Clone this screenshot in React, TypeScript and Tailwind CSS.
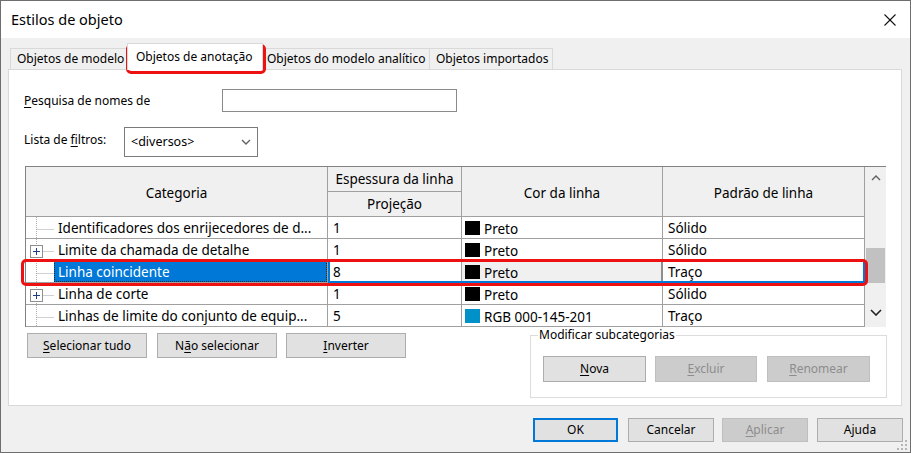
import React from 'react'

type Row = {
    name: string
    plus?: boolean
    selected?: boolean
    thick: string
    swatch: string
    color: string
    pattern: string
}

const rows: Row[] = [
    { name: 'Identificadores dos enrijecedores de d...', thick: '1', swatch: '#000000', color: 'Preto', pattern: 'Sólido' },
    { name: 'Limite da chamada de detalhe', plus: true, thick: '1', swatch: '#000000', color: 'Preto', pattern: 'Sólido' },
    { name: 'Linha coincidente', selected: true, thick: '8', swatch: '#000000', color: 'Preto', pattern: 'Traço' },
    { name: 'Linha de corte', plus: true, thick: '1', swatch: '#000000', color: 'Preto', pattern: 'Sólido' },
    { name: 'Linhas de limite do conjunto de equip...', thick: '5', swatch: '#0091c9', color: 'RGB 000-145-201', pattern: 'Traço' },
]

function TreeLines({ plus }: { plus?: boolean }) {
    return (
        <svg width="28" height="21" viewBox="0 0 28 21" className="shrink-0">
            <line x1="10.5" y1="0" x2="10.5" y2="21" stroke="#b0b0b0" strokeDasharray="1 1" />
            <line x1={plus ? 16.5 : 10.5} y1="12.5" x2="28" y2="12.5" stroke="#a0a0a0" strokeDasharray="1 1" />
            {plus && (
                <g>
                    <rect x="4.5" y="6.5" width="12" height="12" fill="#ffffff" stroke="#8e8e8e" />
                    <line x1="7" y1="12.5" x2="14" y2="12.5" stroke="#1e3f8a" />
                    <line x1="10.5" y1="9" x2="10.5" y2="16" stroke="#1e3f8a" />
                </g>
            )}
        </svg>
    )
}

function Btn({ children, w, disabled, primary }: { children: React.ReactNode; w: string; disabled?: boolean; primary?: boolean }) {
    const base = 'flex items-center justify-center text-[12px] shrink-0'
    const look = disabled
        ? 'bg-[#cccccc] border border-[#bfbfbf] text-[#8d8d8d]'
        : primary
          ? 'bg-[#e1e1e1] border-2 border-[#0078d7] text-black'
          : 'bg-[#e1e1e1] border border-[#adadad] text-black'
    return <div className={`${base} ${look} ${w}`}>{children}</div>
}

function Chevron({ up }: { up?: boolean }) {
    return (
        <svg width="10" height="6" viewBox="0 0 10 6">
            <polyline
                points={up ? '1,5 5,1 9,5' : '1,1 5,5 9,1'}
                fill="none"
                stroke="#606060"
                strokeWidth="1.4"
            />
        </svg>
    )
}

export default function App() {
    return (
        <div className="relative w-[911px] h-[453px] overflow-hidden border border-[#6e6e6e] bg-[#f0f0f0] text-black font-['Segoe_UI','Noto_Sans',sans-serif] flex flex-col">
            {/* title bar */}
            <div className="h-[37px] bg-white flex items-center justify-between pl-[10px] pr-[14px] shrink-0">
                <span className="text-[14.5px]">Estilos de objeto</span>
                <svg width="12" height="12" viewBox="0 0 12 12">
                    <line x1="0.5" y1="0.5" x2="11.5" y2="11.5" stroke="#111" strokeWidth="1.1" />
                    <line x1="11.5" y1="0.5" x2="0.5" y2="11.5" stroke="#111" strokeWidth="1.1" />
                </svg>
            </div>

            <div className="flex flex-col px-[7px]">
                {/* tabs */}
                <div className="h-[31px] flex items-end text-[12px]">
                    <div className="ml-[2px] w-[117px] h-[21px] border border-b-0 border-[#d9d9d9] bg-[#f0f0f0] flex items-center pl-[6px]">
                        Objetos de modelo
                    </div>
                    <div className="relative z-10 -mb-px w-[136px] h-[27px] bg-white border border-b-0 border-[#d9d9d9] flex items-center pl-[8px]">
                        Objetos de anotação
                    </div>
                    <div className="w-[167px] h-[21px] border border-b-0 border-l-0 border-[#d9d9d9] bg-[#f0f0f0] flex items-center pl-[4px]">
                        Objetos do modelo analítico
                    </div>
                    <div className="w-[123px] h-[21px] border border-b-0 border-l-0 border-[#d9d9d9] bg-[#f0f0f0] flex items-center pl-[6px]">
                        Objetos importados
                    </div>
                </div>

                {/* panel */}
                <div className="w-[894px] h-[337px] bg-white border border-[#d9d9d9] flex flex-col pl-[15px] pt-[19px] text-[12px]">
                    <div className="h-[23px] flex items-center">
                        <span className="w-[198px]">
                            <u className="underline-offset-2">P</u>esquisa de nomes de
                        </span>
                        <div className="w-[235px] h-[23px] border border-[#8a8a8a]" />
                    </div>

                    <div className="mt-[15px] h-[30px] flex items-center">
                        <span className="w-[100px] -mt-[4px]">
                            Lista de <u className="underline-offset-2">f</u>iltros:
                        </span>
                        <div className="w-[134px] h-[30px] border border-[#7a7a7a] flex items-center justify-between pl-[6px] pr-[6px] text-[12.5px]">
                            <span>&lt;diversos&gt;</span>
                            <Chevron />
                        </div>
                    </div>

                    {/* grid */}
                    <div className="mt-[9px] ml-[1px] w-[861px] h-[161px] border-t border-l border-[#828282] flex text-[13.5px]">
                        <div className="w-[839px] flex flex-col">
                            <div className="h-[50px] shrink-0 bg-[#f0f0f0] border-b border-[#a0a0a0] flex">
                                <div className="w-[302px] border-r border-[#a0a0a0] flex items-center justify-center pt-[3px]">Categoria</div>
                                <div className="w-[134px] border-r border-[#a0a0a0] flex flex-col">
                                    <div className="h-[25px] border-b border-[#a0a0a0] flex items-center justify-center whitespace-nowrap">Espessura da linha</div>
                                    <div className="flex-1 flex items-center justify-center">Projeção</div>
                                </div>
                                <div className="w-[201px] border-r border-[#a0a0a0] flex items-center justify-center pt-[3px]">Cor da linha</div>
                                <div className="w-[202px] border-r border-[#a0a0a0] flex items-center justify-center pt-[3px]">Padrão de linha</div>
                            </div>

                            {rows.map((r) => (
                                <div key={r.name} className="relative h-[22px] shrink-0 border-b border-[#a0a0a0] flex whitespace-nowrap">
                                    <div className="w-[302px] border-r border-[#a0a0a0] flex items-stretch">
                                        <TreeLines plus={r.plus} />
                                        <div
                                            className={
                                                r.selected
                                                    ? 'flex-1 flex items-center pl-[4px] pt-[2px] bg-[#0078d7] text-white outline outline-1 outline-dotted outline-[#2a2a2a] -outline-offset-1'
                                                    : 'flex-1 flex items-center pl-[4px] pt-[2px]'
                                            }
                                        >
                                            {r.name}
                                        </div>
                                    </div>
                                    <div className="w-[134px] border-r border-[#a0a0a0] flex items-center pl-[5px] pt-[2px]">{r.thick}</div>
                                    <div
                                        className={
                                            r.selected
                                                ? 'w-[201px] border-r-2 border-[#8f8f8f] bg-[#f0f0f0] flex items-center pl-[3px]'
                                                : 'w-[201px] border-r border-[#a0a0a0] flex items-center pl-[3px]'
                                        }
                                    >
                                        <span className="w-[15px] h-[14px] shrink-0" style={{ backgroundColor: r.swatch }} />
                                        <span className="ml-[4px] pt-[3px]">{r.color}</span>
                                    </div>
                                    <div className="w-[202px] border-r border-[#a0a0a0] flex items-center pl-[5px] pt-[2px]">{r.pattern}</div>
                                    {r.selected && (
                                        <div className="absolute left-[302px] -top-px w-[537px] h-[23px] border-2 border-[#0078d7] pointer-events-none" />
                                    )}
                                </div>
                            ))}
                        </div>

                        {/* scrollbar */}
                        <div className="w-[21px] bg-[#f0f0f0] flex flex-col">
                            <div className="h-[21px] flex items-center justify-center">
                                <Chevron up />
                            </div>
                            <div className="h-[60px]" />
                            <div className="h-[35px] mx-[1px] bg-[#c1c1c1]" />
                            <div className="h-[19px]" />
                            <div className="h-[21px] flex items-center justify-center">
                                <svg width="12" height="7" viewBox="0 0 12 7">
                                    <polyline points="1,1 6,6 11,1" fill="none" stroke="#222" strokeWidth="1.6" />
                                </svg>
                            </div>
                        </div>
                    </div>

                    {/* bottom of panel */}
                    <div className="flex items-start">
                        <div className="mt-[6px] ml-[3px] flex">
                            <Btn w="w-[120px] h-[25px]">
                                <span><u className="underline-offset-2">S</u>elecionar tudo</span>
                            </Btn>
                            <div className="ml-[10px]">
                                <Btn w="w-[120px] h-[25px]">
                                    <span>N<u className="underline-offset-2">ã</u>o selecionar</span>
                                </Btn>
                            </div>
                            <div className="ml-[9px]">
                                <Btn w="w-[120px] h-[25px]">
                                    <span><u className="underline-offset-2">I</u>nverter</span>
                                </Btn>
                            </div>
                        </div>

                        <fieldset className="ml-[124px] w-[357px] h-[71px] border border-[#dcdcdc]">
                            <legend className="ml-[7px] px-[1px] leading-[16px]">Modificar subcategorias</legend>
                            <div className="mt-[13px] ml-[12px] flex">
                                <Btn w="w-[103px] h-[26px]">
                                    <span><u className="underline-offset-2">N</u>ova</span>
                                </Btn>
                                <div className="ml-[9px]">
                                    <Btn w="w-[102px] h-[26px]" disabled>
                                        <span><u className="underline-offset-2">E</u>xcluir</span>
                                    </Btn>
                                </div>
                                <div className="ml-[10px]">
                                    <Btn w="w-[103px] h-[26px]" disabled>
                                        <span><u className="underline-offset-2">R</u>enomear</span>
                                    </Btn>
                                </div>
                            </div>
                        </fieldset>
                    </div>
                </div>

                {/* dialog buttons */}
                <div className="mt-[12px] flex justify-end">
                    <Btn w="w-[85px] h-[24px]" primary>OK</Btn>
                    <div className="ml-[10px]">
                        <Btn w="w-[86px] h-[24px]">Cancelar</Btn>
                    </div>
                    <div className="ml-[8px]">
                        <Btn w="w-[86px] h-[24px]" disabled>
                            <span><u className="underline-offset-2">A</u>plicar</span>
                        </Btn>
                    </div>
                    <div className="ml-[9px]">
                        <Btn w="w-[86px] h-[24px]">Ajuda</Btn>
                    </div>
                </div>
            </div>

            {/* size grip */}
            <svg className="absolute right-[2px] bottom-[1px]" width="12" height="12" viewBox="0 0 12 12">
                <rect x="9" y="1" width="2" height="2" fill="#b5b5b5" />
                <rect x="5" y="5" width="2" height="2" fill="#b5b5b5" />
                <rect x="9" y="5" width="2" height="2" fill="#b5b5b5" />
                <rect x="1" y="9" width="2" height="2" fill="#b5b5b5" />
                <rect x="5" y="9" width="2" height="2" fill="#b5b5b5" />
                <rect x="9" y="9" width="2" height="2" fill="#b5b5b5" />
            </svg>

            {/* red highlight marks */}
            <div className="absolute left-[125px] top-[43px] w-[140px] h-[30px] border-[3px] border-[#ee1111] rounded-[5px] pointer-events-none" />
            <div className="absolute left-[20px] top-[258px] w-[847px] h-[27px] border-[3px] border-[#ee1111] rounded-[5px] pointer-events-none" />
        </div>
    )
}
